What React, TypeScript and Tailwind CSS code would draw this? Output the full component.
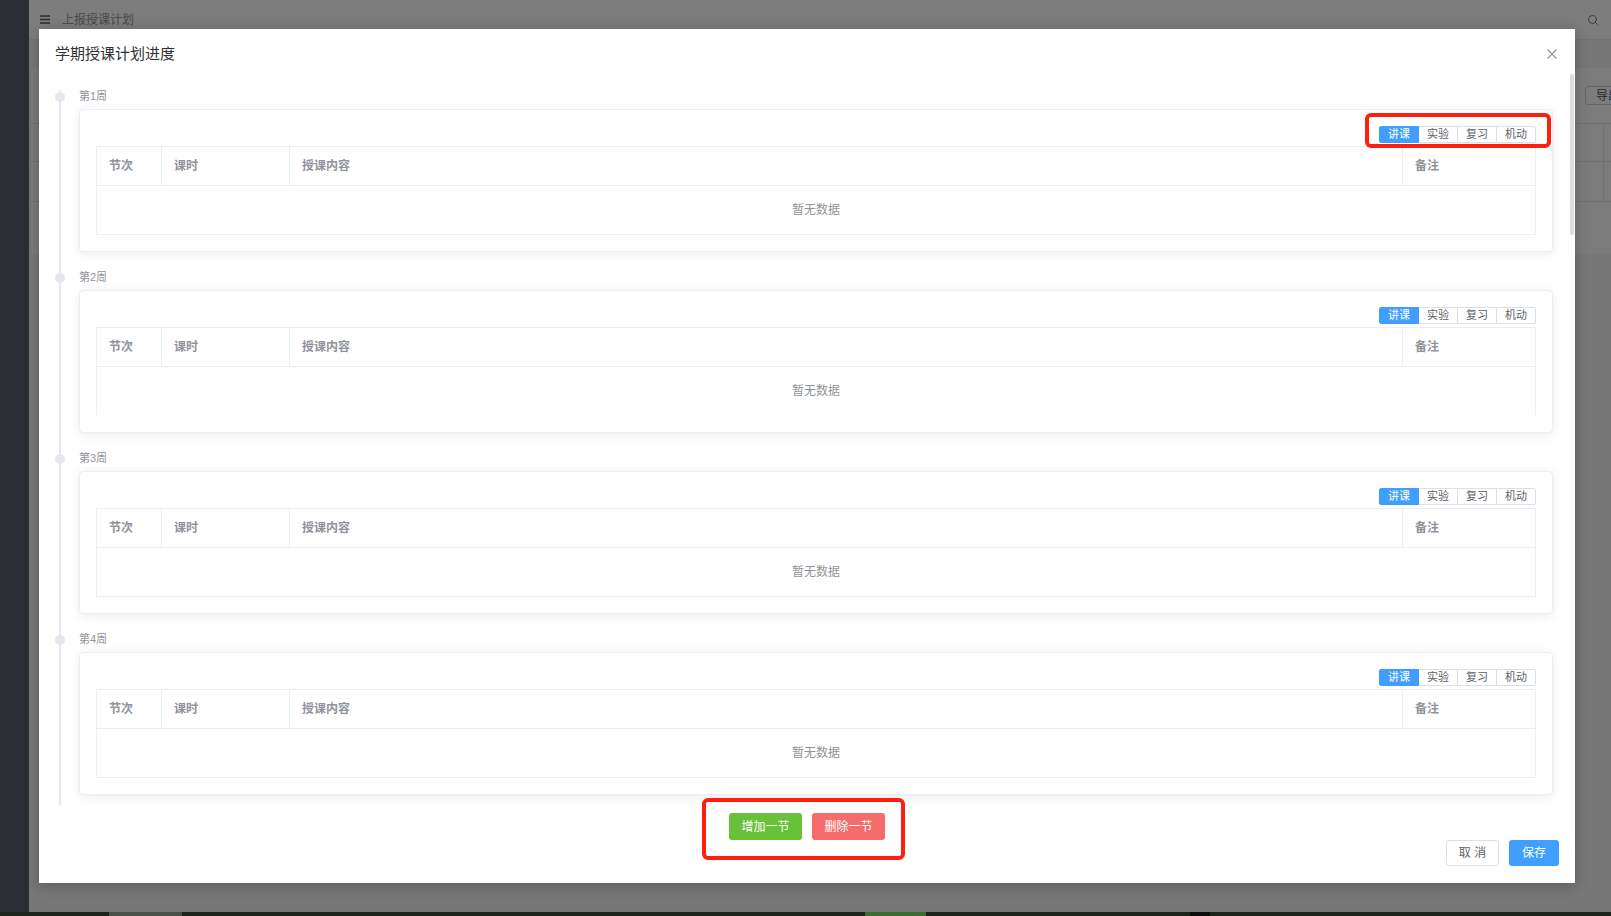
import React from 'react';
import { Search } from 'lucide-react';

// only the first weeks are in view, the rest sit below the fold
const WEEKS = ['第1周', '第2周', '第3周', '第4周'];
const TYPES = ['讲课', '实验', '复习', '机动'];

const WeekCard: React.FC<{ openBottom?: boolean }> = ({ openBottom }) => (
  <div className="h-[143px] rounded-[4px] border border-[#ebeef5] bg-white p-[16px] shadow-[0_2px_12px_0_rgba(0,0,0,0.08)]">
    {/* lesson type switch */}
    <div className="flex h-[17px] justify-end">
      {TYPES.map((t, i) => (
        <div
          key={t}
          className={
            i === 0
              ? 'relative z-10 flex w-[40px] items-center justify-center rounded-l-[2px] border border-[#409eff] bg-[#409eff] text-[11px] text-white'
              : i === TYPES.length - 1
              ? '-ml-px flex w-[40px] items-center justify-center rounded-r-[2px] border border-[#dcdfe6] bg-white text-[11px] text-[#606266]'
              : '-ml-px flex w-[40px] items-center justify-center border border-[#dcdfe6] bg-white text-[11px] text-[#606266]'
          }
        >
          {t}
        </div>
      ))}
    </div>

    <div
      className={
        openBottom
          ? 'mt-[3px] border border-b-0 border-[#ebeef5] text-[12px]'
          : 'mt-[3px] border border-[#ebeef5] text-[12px]'
      }
    >
      <div className="flex h-[39px] border-b border-[#ebeef5] font-bold text-[#909399]">
        <div className="flex w-[65px] items-center border-r border-[#ebeef5] pl-[12px]">节次</div>
        <div className="flex w-[128px] items-center border-r border-[#ebeef5] pl-[12px]">课时</div>
        <div className="flex flex-1 items-center border-r border-[#ebeef5] pl-[12px]">授课内容</div>
        <div className="flex w-[132px] items-center pl-[12px]">备注</div>
      </div>
      <div className="flex h-[48px] items-center justify-center text-[#909399]">暂无数据</div>
    </div>
  </div>
);

export default function App() {
  return (
    <div className="relative h-[916px] w-full overflow-hidden bg-[#777777] font-['Liberation_Sans','Noto_Sans_CJK_SC',sans-serif]">
      {/* page behind the dialog (already dimmed) */}
      <div className="flex h-[912px]">
        <aside className="w-[29px] shrink-0 bg-[#2a2d31]" />
        <div className="flex flex-1 flex-col">
          <header className="flex h-[40px] items-center border-b border-[#737373] bg-[#7d7d7d] pl-[11px] pr-[12px]">
            <svg width="10" height="9" viewBox="0 0 10 9" className="text-[#2e2e2e]">
              <path d="M0 1h10M0 4.5h10M0 8h10" stroke="currentColor" strokeWidth="1.3" />
            </svg>
            <span className="ml-[12px] text-[12px] text-[#4a4a4a]">上报授课计划</span>
            <div className="flex-1" />
            <Search size={12} strokeWidth={1.6} className="text-[#2e2e2e]" />
          </header>
          <div className="h-[28px]" />
          <div className="ml-[1px] flex h-[186px] flex-col border-l border-[#727272] bg-[#7c7c7c]">
            <div className="flex justify-end pt-[18px]">
              <div className="-mr-[14px] flex h-[19px] w-[40px] items-center rounded-[3px] border border-[#666666] pl-[10px] text-[12px] text-[#2b2b2b]">
                导出
              </div>
            </div>
            <div className="mt-[18px] border-t border-[#707070]">
              <div className="flex h-[38px] border-b border-[#707070]">
                <div className="flex-1" />
                <div className="w-[8px] border-l border-[#707070]" />
              </div>
              <div className="flex h-[40px] border-b border-[#707070]">
                <div className="flex-1" />
                <div className="w-[8px] border-l border-[#707070]" />
              </div>
            </div>
          </div>
        </div>
      </div>
      <div className="flex h-[4px] bg-[#1d241c]">
        <div className="w-[109px]" />
        <div className="w-[73px] bg-[#4a5147]" />
        <div className="w-[683px]" />
        <div className="w-[61px] bg-[#3d6d35]" />
        <div className="w-[264px]" />
        <div className="w-[20px] bg-[#0c0c0c]" />
      </div>

      {/* dialog */}
      <div className="absolute left-[39px] top-[29px] flex h-[854px] w-[1536px] flex-col bg-white shadow-[0_2px_14px_rgba(0,0,0,0.25)]">
        <div className="flex h-[45px] items-start justify-between pl-[16px] pr-[18px] pt-[15px]">
          <span className="text-[15px] leading-[20px] text-[#303133]">学期授课计划进度</span>
          <div className="flex h-[20px] items-center">
            <svg width="10" height="10" viewBox="0 0 10 10">
              <path d="M0.5 0.5l9 9M9.5 0.5l-9 9" stroke="#909399" strokeWidth="1.1" />
            </svg>
          </div>
        </div>

        <div className="h-[731px] w-[1530px] overflow-hidden px-[16px] pt-[16px]">
          <ul>
            {WEEKS.map((w, i) => (
              <li key={w} className="relative pb-[19px] pl-[24px]">
                <div className="absolute left-[4px] top-0 h-[calc(100%+12px)] w-[2px] bg-[#e4e7ed]" />
                <div className="absolute left-0 top-[1.5px] h-[10px] w-[10px] rounded-full bg-[#e4e7ed]" />
                <div className="mb-[6px] h-[13px] text-[11px] leading-[13px] text-[#909399]">{w}</div>
                <WeekCard openBottom={i === 1} />
              </li>
            ))}
          </ul>
        </div>

        <div className="flex h-[35px] justify-center gap-[10px] pt-[8px]">
          <button className="h-[27px] w-[73px] rounded-[3px] bg-[#67c23a] text-[12px] text-white">增加一节</button>
          <button className="h-[27px] w-[73px] rounded-[3px] bg-[#f56c6c] text-[12px] text-white">删除一节</button>
        </div>

        <div className="flex h-[26px] justify-end gap-[10px] pr-[16px]">
          <button className="h-[26px] w-[53px] rounded-[3px] border border-[#dcdfe6] bg-white text-[12px] text-[#606266]">取 消</button>
          <button className="h-[26px] w-[50px] rounded-[3px] bg-[#409eff] text-[12px] text-white">保存</button>
        </div>

        {/* scrollbar thumb */}
        <div className="absolute left-[1531px] top-[45px] h-[161px] w-[4px] rounded-full bg-[#dcdcdc]" />

        {/* annotation boxes */}
        <div className="absolute left-[1326px] top-[84px] h-[35px] w-[186px] rounded-[6px] border-[4px] border-[#ff1f0f]" />
        <div className="absolute left-[663px] top-[769px] h-[62px] w-[203px] rounded-[6px] border-[4px] border-[#ff1f0f]" />
      </div>
    </div>
  );
}
